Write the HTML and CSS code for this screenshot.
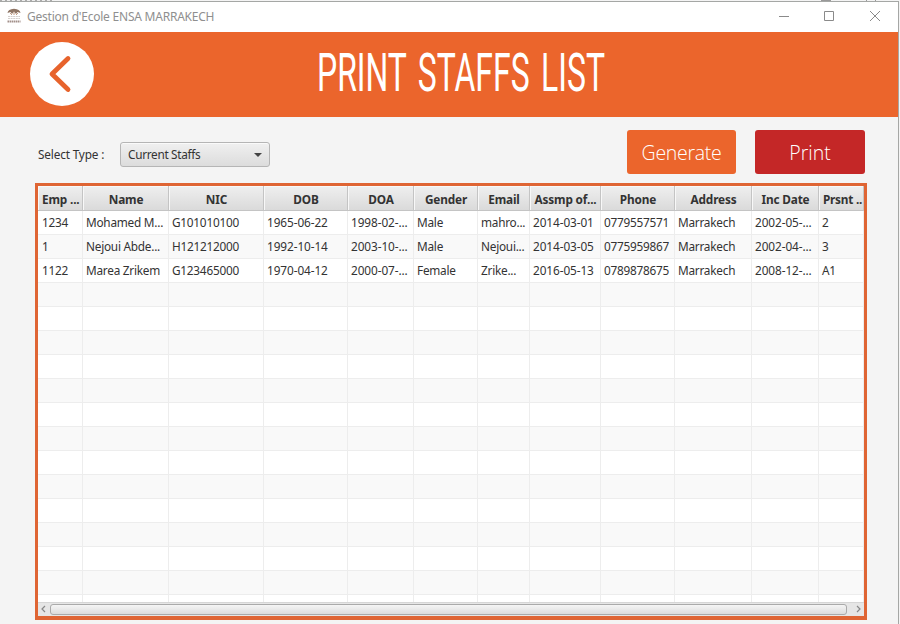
FILE: index.html
```html
<!DOCTYPE html>
<html lang="en">
<head>
<meta charset="utf-8">
<title>Gestion d'Ecole ENSA MARRAKECH</title>
<link rel="stylesheet" href="styles.css">
</head>
<body>
<div class="backdrop"><i class="bit b1"></i><i class="bit b2"></i><i class="bit b3"></i></div>
<main class="window">
  <header class="titlebar">
    <svg class="app-icon" width="14" height="16" viewBox="0 0 14 16">
      <path d="M.5 5Q1 1 7 .7Q13 1 13.5 5L10.500 4L9 6L7 3.500L5 6L3.500 4Z" fill="#8d7463"/>
      <path d="M3 5L5 7M11 5L9 7M7 4V7" stroke="#c59b80" stroke-width="1"/>
      <path d="M1 8.500H13M1 10.500H13" stroke="#d5cfcc" stroke-width="1" stroke-dasharray="2 .6"/>
      <path d="M.5 13.500H13.500" stroke="#a3908a" stroke-width="2" stroke-dasharray="1.500 .5"/>
    </svg>
    <span class="app-title">Gestion d'Ecole ENSA MARRAKECH</span>
    <svg class="controls" width="110" height="14" viewBox="0 0 110 14" fill="none" stroke="#8a8a8a">
      <path d="M1 6.500H11M46.500 1.500H55.500V10.500H46.500ZM92 1L102 11M102 1L92 11"/>
    </svg>
  </header>
  <section class="banner">
    <svg class="back" width="64" height="64" viewBox="0 0 64 64">
      <circle cx="32" cy="32" r="32" fill="#fff"/>
      <path d="M38 16.500L22 32L38 47.500" fill="none" stroke="#e7632c" stroke-width="4.800" stroke-linecap="round" stroke-linejoin="round"/>
    </svg>
    <svg class="heading" width="320" height="74" viewBox="0 0 320 74">
      <text x="9" y="57" textLength="288" lengthAdjust="spacingAndGlyphs">PRINT STAFFS LIST</text>
    </svg>
  </section>
  <section class="toolbar">
    <span class="label">Select Type :</span>
    <div class="combo"><span>Current Staffs</span><i class="arrow"></i></div>
    <div class="btn generate">Generate</div>
    <div class="btn print">Print</div>
  </section>
  <section class="table">
    <div class="row head"><b>Emp ...</b><b>Name</b><b>NIC</b><b>DOB</b><b>DOA</b><b>Gender</b><b>Email</b><b>Assmp of...</b><b>Phone</b><b>Address</b><b>Inc Date</b><b>Prsnt ..</b></div>
    <div class="rows">
      <div class="row"><span>1234</span><span>Mohamed M...</span><span>G101010100</span><span>1965-06-22</span><span>1998-02-...</span><span>Male</span><span>mahro...</span><span>2014-03-01</span><span>0779557571</span><span>Marrakech</span><span>2002-05-...</span><span>2</span></div>
      <div class="row"><span>1</span><span>Nejoui Abde...</span><span>H121212000</span><span>1992-10-14</span><span>2003-10-...</span><span>Male</span><span>Nejoui...</span><span>2014-03-05</span><span>0775959867</span><span>Marrakech</span><span>2002-04-...</span><span>3</span></div>
      <div class="row"><span>1122</span><span>Marea Zrikem</span><span>G123465000</span><span>1970-04-12</span><span>2000-07-...</span><span>Female</span><span>Zrike...</span><span>2016-05-13</span><span>0789878675</span><span>Marrakech</span><span>2008-12-...</span><span>A1</span></div>
      <div class="row"><span></span><span></span><span></span><span></span><span></span><span></span><span></span><span></span><span></span><span></span><span></span><span></span></div>
      <div class="row"><span></span><span></span><span></span><span></span><span></span><span></span><span></span><span></span><span></span><span></span><span></span><span></span></div>
      <div class="row"><span></span><span></span><span></span><span></span><span></span><span></span><span></span><span></span><span></span><span></span><span></span><span></span></div>
      <div class="row"><span></span><span></span><span></span><span></span><span></span><span></span><span></span><span></span><span></span><span></span><span></span><span></span></div>
      <div class="row"><span></span><span></span><span></span><span></span><span></span><span></span><span></span><span></span><span></span><span></span><span></span><span></span></div>
      <div class="row"><span></span><span></span><span></span><span></span><span></span><span></span><span></span><span></span><span></span><span></span><span></span><span></span></div>
      <div class="row"><span></span><span></span><span></span><span></span><span></span><span></span><span></span><span></span><span></span><span></span><span></span><span></span></div>
      <div class="row"><span></span><span></span><span></span><span></span><span></span><span></span><span></span><span></span><span></span><span></span><span></span><span></span></div>
      <div class="row"><span></span><span></span><span></span><span></span><span></span><span></span><span></span><span></span><span></span><span></span><span></span><span></span></div>
      <div class="row"><span></span><span></span><span></span><span></span><span></span><span></span><span></span><span></span><span></span><span></span><span></span><span></span></div>
      <div class="row"><span></span><span></span><span></span><span></span><span></span><span></span><span></span><span></span><span></span><span></span><span></span><span></span></div>
      <div class="row"><span></span><span></span><span></span><span></span><span></span><span></span><span></span><span></span><span></span><span></span><span></span><span></span></div>
      <div class="row"><span></span><span></span><span></span><span></span><span></span><span></span><span></span><span></span><span></span><span></span><span></span><span></span></div>
      <div class="row"><span></span><span></span><span></span><span></span><span></span><span></span><span></span><span></span><span></span><span></span><span></span><span></span></div>
    </div>
    <div class="scroll">
      <svg width="12" height="13" viewBox="0 0 12 13" fill="none" stroke="#888" stroke-width="1.200"><path d="M7 3L4 6L7 9"/></svg>
      <i class="thumb"></i>
      <svg width="17" height="13" viewBox="0 0 17 13" fill="none" stroke="#888" stroke-width="1.200"><path d="M10 3L13 6L10 9"/></svg>
    </div>
  </section>
</main>
</body>
</html>
```
FILE: styles.css
```css
* { box-sizing: border-box; }
body {
  margin: 0;
  width: 900px;
  height: 624px;
  overflow: hidden;
  background: #f3f3f3;
  color: #333;
  font: 11.8px "Noto Sans", "Open Sans", sans-serif;
  letter-spacing: -0.24px;
  white-space: nowrap;
}
.backdrop { display: flex; height: 1px; background: #f4f4f4; }
.bit { height: 1px; background: #999; }
.b1 { width: 52px; background: repeating-linear-gradient(90deg, #aaa 0 2px, #eee 2px 5px); }
.b2 { width: 10px; margin-left: 769px; }
.b3 { width: 10px; margin-left: 35px; border: solid #999; border-width: 0 1px; background: none; }
.window { width: 899px; height: 623px; border: solid #a5a7a5; border-width: 1px 1px 0 0; background: #f4f4f4; }
.titlebar { display: flex; align-items: center; height: 30px; padding: 0 17px 0 7px; background: #fff; }
.app-icon { margin: -2px 6px 0 0; }
.app-title { margin-top: -2px; color: #8f8f8f; font-size: 12px; letter-spacing: -0.23px; }
.controls { margin-left: auto; margin-right: -7px; }
.banner { display: flex; height: 85px; padding: 10px 0 0 30px; background: #eb652c; }
.heading { margin: -8px 0 0 214px; overflow: visible; fill: #fff; font: 400 53px Roboto, sans-serif; letter-spacing: 0; word-spacing: 6px; }
.toolbar { display: flex; height: 66px; padding: 13px 33px 0 38px; }
.label { width: 82px; padding-top: 16px; line-height: 16px; letter-spacing: -0.16px; }
.combo {
  display: flex; align-items: center; justify-content: space-between;
  width: 150px; height: 25px; margin-top: 12px; padding: 0 7px;
  border: 1px solid #b5b5b5; border-radius: 3px;
  background: linear-gradient(#f0f0f0, #dcdcdc);
  box-shadow: inset 0 1px #fafafa;
}
.combo span { margin-top: -1px; letter-spacing: -0.3px; }
.arrow { border: 4px solid transparent; border-top-color: #444; border-bottom: 0; }
.btn {
  width: 109px; height: 44px; border-radius: 3px;
  color: #fff; font: 350 19.500px/45px "Open Sans", "Noto Sans", sans-serif;
  letter-spacing: -0.3px; text-align: center;
}
.generate { margin-left: 357px; background: #eb652c; }
.print { width: 110px; margin-left: 19px; background: #c42727; letter-spacing: 0; }
.table {
  display: flex; flex-direction: column;
  width: 832px; height: 437px; margin-left: 35px;
  border: 3px solid #df6534; border-bottom-width: 4px; background: #fff;
}
.row {
  display: grid; flex: none; height: 24px;
  grid-template-columns: 45px 86px 95px 84px 66px 64px 52px 71px 74px 77px 67px 45px;
  border-bottom: 1px solid #ededed;
}
.row:nth-child(even) { background: #f9f9f9; }
.row span { overflow: hidden; padding-left: 3px; border-right: 1px solid #ededed; line-height: 23px; }
.row span:first-child, .head b:first-child { padding-left: 4px; }
.row span:nth-child(4), .row span:nth-child(5), .row span:nth-child(8), .row span:nth-child(11) { letter-spacing: -0.08px; }
.row.head { height: 25px; border-bottom-color: #c4c4c4; background: linear-gradient(#efefef, #dadada); }
.head b {
  overflow: hidden; padding-left: 1px; border-right: 1px solid #c4c4c4; box-shadow: inset 1px 1px #f8f8f8;
  line-height: 26px; text-align: center; letter-spacing: -0.16px;
}
.head b:first-child, .head b:last-child { text-align: left; }
.head b:last-child { padding-left: 4px; letter-spacing: -0.25px; }
.rows { flex: 1; min-height: 0; overflow: hidden; }
.scroll { display: flex; flex: none; height: 14px; border-top: 1px solid #d6d6d6; background: #e6e6e6; }
.thumb { flex: 1; height: 11px; margin-top: 1px; border: 1px solid #aaa; border-radius: 3px; background: linear-gradient(#f5f5f5, #dcdcdc); }
```
